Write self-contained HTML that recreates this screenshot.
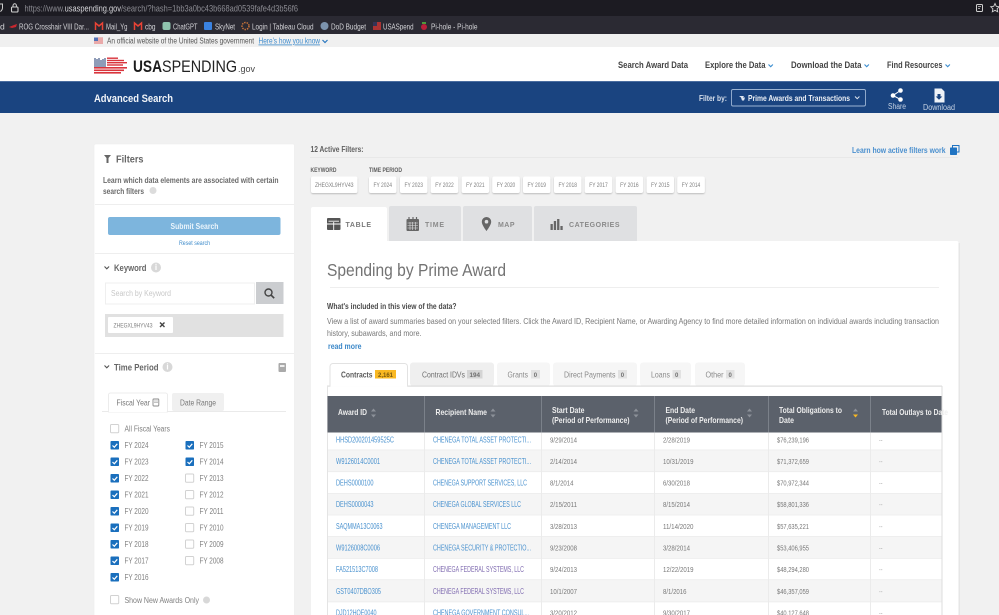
<!DOCTYPE html>
<html lang="en"><head><meta charset="utf-8"><title>Advanced Search | USAspending</title>
<style>
html,body{margin:0;padding:0;background:#f1f1f1;width:999px;height:615px;overflow:hidden}
svg{display:block;position:absolute;left:0;top:0;filter:blur(.35px)}
text{font-family:"Liberation Sans",sans-serif;font-size:8.5px;fill:#666;white-space:pre}
.b{font-weight:bold}
.bm{fill:#d4d4d8;font-size:8.5px}
.nav{fill:#444;font-size:9px;font-weight:bold}
.l{fill:#4a92cf;font-size:8px}
.p{fill:#7f6bb0;font-size:8px}
.g{fill:#787878;font-size:7.5px}
.h{fill:#eeeeee;font-size:8.5px;font-weight:bold}
.f{fill:#808080;font-size:8px}
.t{fill:#808080;font-size:6.5px}
.tb{fill:#8a8a8a;font-size:8px;font-weight:bold}
.st{fill:#6e6e6e;font-size:8.5px}
.bd{fill:#707070;font-size:6px;font-weight:bold}
</style></head><body>
<svg width="999" height="615" viewBox="0 0 999 615" xmlns="http://www.w3.org/2000/svg">
<defs><filter id="s" x="-20%" y="-20%" width="140%" height="150%"><feDropShadow dx="0" dy="1" stdDeviation=".7" flood-color="#000" flood-opacity=".22"/></filter></defs>
<rect width="999" height="615" fill="#f1f1f1"/>
<!-- browser -->
<rect width="999" height="16" fill="#1c1b22"/>
<rect y="16" width="999" height="18" fill="#2b2a33"/>
<rect y="34" width="999" height="13" fill="#f0f0f0"/>
<path d="M-2 4h4.500v4c0 2-2 3.500-2.200 3.500" fill="none" stroke="#ccc" stroke-width="1"/>
<rect x="11.500" y="7" width="6.500" height="5" rx="1" fill="none" stroke="#d0d0d0" stroke-width="1.100"/><path d="M13 7V5.500a1.700 1.700 0 0 1 3.400 0V7" fill="none" stroke="#d0d0d0" stroke-width="1"/>
<text x="24.500" y="11.500" textLength="273.500" lengthAdjust="spacingAndGlyphs" style="font-size:9.500px;fill:#8b8b92">https://www.<tspan fill="#d8d8dc">usaspending.gov</tspan>/search/?hash=1bb3a0bc43b668ad0539fafe4d3b56f6</text>
<rect x="976.500" y="4.500" width="6" height="7" rx="1" fill="none" stroke="#cfcfcf"/><path d="M978 6.500h3M978 8.500h2" stroke="#cfcfcf" stroke-width=".7"/>
<path d="M995 3.500l1.300 2.800 3 .4-2.200 2.100.6 3-2.700-1.500-2.700 1.500.6-3-2.200-2.100 3-.4z" fill="none" stroke="#cfcfcf" stroke-width=".9"/>
<text class="bm" x="0" y="29.500">d</text>
<path d="M9 27l5-2 3-1-1 3-4 1z" fill="#c8282f"/>
<text class="bm" x="19" y="29.500" textLength="70" lengthAdjust="spacingAndGlyphs">ROG Crosshair VIII Dar...</text>
<path d="M95.500 30v-7l3.500 3 3.500-3v7" fill="none" stroke="#ea4335" stroke-width="1.500"/>
<text class="bm" x="106" y="29.500" textLength="21.500" lengthAdjust="spacingAndGlyphs">Mail_Yg</text>
<path d="M134.500 30v-7l3.500 3 3.500-3v7" fill="none" stroke="#ea4335" stroke-width="1.500"/>
<text class="bm" x="145" y="29.500" textLength="10.500" lengthAdjust="spacingAndGlyphs">cbg</text>
<rect x="162.500" y="22" width="8" height="8" rx="2" fill="#8fc3ae"/>
<text class="bm" x="173" y="29.500" textLength="24.500" lengthAdjust="spacingAndGlyphs">ChatGPT</text>
<rect x="204" y="22" width="8" height="8" rx="1" fill="#3a82e0"/>
<text class="bm" x="215" y="29.500" textLength="20" lengthAdjust="spacingAndGlyphs">SkyNet</text>
<circle cx="245.500" cy="26" r="3.500" fill="none" stroke="#c6733a" stroke-width="1.500" stroke-dasharray="1.500 1"/>
<text class="bm" x="252" y="29.500" textLength="61.500" lengthAdjust="spacingAndGlyphs">Login | Tableau Cloud</text>
<circle cx="324.500" cy="26" r="4" fill="#7c93ad"/>
<text class="bm" x="331" y="29.500" textLength="35" lengthAdjust="spacingAndGlyphs">DoD Budget</text>
<rect x="373" y="22" width="8" height="8" fill="#a33"/><rect x="373" y="22" width="4" height="4" fill="#335"/>
<text class="bm" x="383" y="29.500" textLength="30.500" lengthAdjust="spacingAndGlyphs">USASpend</text>
<circle cx="424" cy="27" r="3" fill="#b8203a"/><path d="M422 23h4" stroke="#4c9a3a" stroke-width="2"/>
<text class="bm" x="431" y="29.500" textLength="46.500" lengthAdjust="spacingAndGlyphs">Pi-hole - Pi-hole</text>
<!-- gov banner -->
<rect x="94" y="37.500" width="9" height="6.500" fill="#e28a8a"/><path d="M94 39h9M94 41h9M94 43h9" stroke="#f6dede" stroke-width=".7"/><rect x="94" y="37.500" width="4" height="3.500" fill="#5271b5"/>
<text x="107" y="43.500" textLength="147" lengthAdjust="spacingAndGlyphs" style="font-size:8px;fill:#555">An official website of the United States government</text>
<text x="258.500" y="43.500" textLength="61.500" lengthAdjust="spacingAndGlyphs" text-decoration="underline" style="font-size:8px;fill:#3d8bcd">Here's how you know</text>
<path d="M322.500 40l2.500 2.500 2.500-2.500" fill="none" stroke="#2a78c0" stroke-width="1.200"/>
<!-- header -->
<rect y="47" width="999" height="34" fill="#fff"/>
<g fill="#1f3a70"><rect x="94.500" y="58" width="1" height="9"/><rect x="96.500" y="59" width="1" height="8"/><rect x="98.500" y="58" width="1" height="9"/><rect x="100.500" y="60" width="1" height="7"/><rect x="102.500" y="59" width="1" height="8"/><rect x="104.500" y="58" width="1" height="9"/></g>
<g fill="#d9343c"><rect x="107" y="57.500" width="11" height="1.400"/><rect x="107" y="59.800" width="17" height="1.400"/><rect x="107" y="62" width="20" height="1.400"/><rect x="107" y="64.300" width="16" height="1.400"/><rect x="94" y="67" width="33" height="1.600"/><rect x="94" y="69.500" width="30" height="1.600"/><rect x="94" y="72" width="27" height="1.600"/></g>
<text x="133" y="72" textLength="29" lengthAdjust="spacingAndGlyphs" style="font-size:16.500px;font-weight:bold;fill:#1b1b1b">USA</text>
<text x="162" y="72" textLength="75" lengthAdjust="spacingAndGlyphs" style="font-size:16.500px;fill:#222">SPENDING</text>
<text x="238" y="72" textLength="17" lengthAdjust="spacingAndGlyphs" style="font-size:9px;fill:#444">.gov</text>
<text class="nav" x="618" y="68" textLength="70" lengthAdjust="spacingAndGlyphs">Search Award Data</text>
<text class="nav" x="705" y="68" textLength="60.500" lengthAdjust="spacingAndGlyphs">Explore the Data</text>
<path d="M768.500 64.500l2.200 2.200 2.200-2.200" fill="none" stroke="#3c8ed0" stroke-width="1.100"/>
<text class="nav" x="791" y="68" textLength="70.500" lengthAdjust="spacingAndGlyphs">Download the Data</text>
<path d="M864.500 64.500l2.200 2.200 2.200-2.200" fill="none" stroke="#3c8ed0" stroke-width="1.100"/>
<text class="nav" x="887" y="68" textLength="55.500" lengthAdjust="spacingAndGlyphs">Find Resources</text>
<path d="M945.500 64.500l2.200 2.200 2.200-2.200" fill="none" stroke="#3c8ed0" stroke-width="1.100"/>
<!-- blue bar -->
<rect y="81" width="999" height="32" fill="#1a4480"/>
<rect y="81" width="999" height="1" fill="#4a6da0"/>
<text x="94" y="102" textLength="79" lengthAdjust="spacingAndGlyphs" class="b" style="font-size:11px;fill:#f2f5f9">Advanced Search</text>
<text x="699" y="101" textLength="28" lengthAdjust="spacingAndGlyphs" class="b" style="font-size:8px;fill:#d8e0eb">Filter by:</text>
<rect x="731.500" y="89.500" width="134" height="16.500" rx="1.500" fill="none" stroke="#9cb4d3" stroke-width=".9"/>
<path d="M739 96h5l-1 1.500h2l-1 3h-2l-1-3z" fill="#dfe6f0"/>
<text x="748" y="101" textLength="102" lengthAdjust="spacingAndGlyphs" class="b" style="font-size:8.500px;fill:#edf1f6">Prime Awards and Transactions</text>
<path d="M855 96.500l2.200 2.200 2.200-2.200" fill="none" stroke="#dfe6f0" stroke-width="1"/>
<g fill="#fff"><circle cx="900.500" cy="90.500" r="2.300"/><circle cx="893" cy="95.500" r="2.300"/><circle cx="900.500" cy="99.500" r="2.300"/></g><path d="M900.500 90.500L893 95.500l7.500 4" fill="none" stroke="#fff" stroke-width="1"/>
<text x="888" y="109" textLength="18" lengthAdjust="spacingAndGlyphs" style="font-size:8px;fill:#c5d2e3">Share</text>
<path d="M934.500 88.500h7l3 3v11h-10z" fill="#eef2f7"/><path d="M937.500 94h3v2.500h1.800l-3.300 3.200-3.300-3.200h1.800z" fill="#1a4480"/>
<text x="923" y="110" textLength="32" lengthAdjust="spacingAndGlyphs" style="font-size:8px;fill:#c5d2e3">Download</text>
<!-- left panel -->
<rect x="94" y="144" width="200.500" height="480" rx="2" fill="#fff" stroke="#ececec" stroke-width=".6"/>
<path d="M104 155h7l-2.500 3v5h-2v-5z" fill="#666"/>
<text x="116" y="162.500" textLength="27.500" lengthAdjust="spacingAndGlyphs" class="b" style="font-size:10.500px;fill:#666">Filters</text>
<text x="103" y="183" textLength="175.500" lengthAdjust="spacingAndGlyphs" class="b" style="font-size:8px;fill:#6a6a6a">Learn which data elements are associated with certain</text>
<text x="103" y="194" textLength="41" lengthAdjust="spacingAndGlyphs" class="b" style="font-size:8px;fill:#6a6a6a">search filters</text>
<circle cx="153" cy="190.500" r="3.500" fill="#dcdcdc"/>
<rect x="95" y="204" width="199" height="1" fill="#eee"/>
<rect x="108" y="217" width="172.500" height="18" rx="2" fill="#7db5dd"/>
<text x="170.500" y="229" textLength="48" lengthAdjust="spacingAndGlyphs" class="b" style="font-size:8.500px;fill:#eaf4fb">Submit Search</text>
<text x="179" y="245" textLength="31" lengthAdjust="spacingAndGlyphs" style="font-size:6.500px;fill:#3f8ccb">Reset search</text>
<rect x="95" y="253" width="199" height="1" fill="#eee"/>
<path d="M104.500 266.500l2.300 2.300 2.300-2.300" fill="none" stroke="#555" stroke-width="1.100"/>
<text x="114" y="271" textLength="32.500" lengthAdjust="spacingAndGlyphs" class="b" style="font-size:9.500px;fill:#666">Keyword</text>
<circle cx="156" cy="267.500" r="5" fill="#d8d8d8"/><rect x="155.400" y="265.500" width="1.200" height="4.500" fill="#fff"/><rect x="155.400" y="263.800" width="1.200" height="1.100" fill="#fff"/>
<rect x="105.500" y="283" width="149" height="21" fill="#fff" stroke="#efefef"/>
<text x="111" y="296" textLength="60" lengthAdjust="spacingAndGlyphs" style="font-size:8px;fill:#c8c8c8">Search by Keyword</text>
<rect x="256" y="282" width="27.500" height="22" fill="#cbcdd0"/>
<circle cx="268.500" cy="292.500" r="3.500" fill="none" stroke="#444" stroke-width="1.400"/><path d="M271 295l3.200 3.200" stroke="#444" stroke-width="1.600"/>
<rect x="105" y="314" width="178.500" height="23" fill="#e1e1e1"/>
<rect x="108" y="317" width="65" height="16" rx="1" fill="#fff"/>
<text class="t" x="113.500" y="327.500" textLength="39" lengthAdjust="spacingAndGlyphs" style="font-size:6px">ZHEGXL9HYV43</text>
<path d="M160 322.500l4.500 4.500M164.500 322.500l-4.500 4.500" stroke="#444" stroke-width="1.400"/>
<rect x="95" y="353" width="199" height="1" fill="#eee"/>
<path d="M104.500 365.500l2.300 2.300 2.300-2.300" fill="none" stroke="#555" stroke-width="1.100"/>
<text x="114" y="370.500" textLength="44.500" lengthAdjust="spacingAndGlyphs" class="b" style="font-size:9.500px;fill:#666">Time Period</text>
<circle cx="167.500" cy="367" r="5" fill="#d8d8d8"/><rect x="166.900" y="365" width="1.200" height="4.500" fill="#fff"/><rect x="166.900" y="363.300" width="1.200" height="1.100" fill="#fff"/>
<rect x="278.500" y="363" width="7.500" height="9" rx="1" fill="#aaa"/><rect x="280" y="365" width="4.500" height="2" fill="#eee"/>
<rect x="102" y="411" width="184" height="1" fill="#eaeaea"/>
<path d="M108.500 412v-17a2 2 0 0 1 2-2h55a2 2 0 0 1 2 2v17z" fill="#fff" stroke="#e8e8e8" stroke-width=".8"/>
<rect x="108.900" y="410" width="57.800" height="2" fill="#fff"/>
<text x="116.500" y="405.500" textLength="33.500" lengthAdjust="spacingAndGlyphs" style="font-size:8.500px;fill:#777">Fiscal Year</text>
<rect x="153" y="399" width="5.800" height="7" rx=".7" fill="none" stroke="#888" stroke-width=".9"/><path d="M154 401h4M154 402.500h4" stroke="#888" stroke-width=".6"/>
<rect x="172" y="393" width="52" height="18" rx="2" fill="#f0f0f0"/>
<text x="180" y="405.500" textLength="36" lengthAdjust="spacingAndGlyphs" style="font-size:8.500px;fill:#777">Date Range</text>
<!-- checkboxes -->
<g fill="#fff" stroke="#d2d2d2" stroke-width="1">
<rect x="110.500" y="424.500" width="8.200" height="8.200" rx="1"/>
<rect x="110.500" y="595.500" width="8.200" height="8.200" rx="1"/>
<rect x="185.500" y="474" width="8.200" height="8.200" rx="1"/>
<rect x="185.500" y="490.500" width="8.200" height="8.200" rx="1"/>
<rect x="185.500" y="507" width="8.200" height="8.200" rx="1"/>
<rect x="185.500" y="523.500" width="8.200" height="8.200" rx="1"/>
<rect x="185.500" y="540" width="8.200" height="8.200" rx="1"/>
<rect x="185.500" y="556.500" width="8.200" height="8.200" rx="1"/>
</g>
<g fill="#1a6fbd">
<rect x="110.500" y="441" width="8.500" height="8.500" rx=".8"/><rect x="110.500" y="457.500" width="8.500" height="8.500" rx=".8"/><rect x="110.500" y="474" width="8.500" height="8.500" rx=".8"/><rect x="110.500" y="490.500" width="8.500" height="8.500" rx=".8"/><rect x="110.500" y="507" width="8.500" height="8.500" rx=".8"/><rect x="110.500" y="523.500" width="8.500" height="8.500" rx=".8"/><rect x="110.500" y="540" width="8.500" height="8.500" rx=".8"/><rect x="110.500" y="556.500" width="8.500" height="8.500" rx=".8"/><rect x="110.500" y="573" width="8.500" height="8.500" rx=".8"/>
<rect x="185.500" y="441" width="8.500" height="8.500" rx=".8"/><rect x="185.500" y="457.500" width="8.500" height="8.500" rx=".8"/>
</g>
<g fill="none" stroke="#fff" stroke-width="1.200">
<path d="M112.500 445.500l1.800 1.800 3-3.500M112.500 462l1.800 1.800 3-3.500M112.500 478.500l1.800 1.800 3-3.500M112.500 495l1.800 1.800 3-3.500M112.500 511.500l1.800 1.800 3-3.500M112.500 528l1.800 1.800 3-3.500M112.500 544.500l1.800 1.800 3-3.500M112.500 561l1.800 1.800 3-3.500M112.500 577.500l1.800 1.800 3-3.500M187.500 445.500l1.800 1.800 3-3.500M187.500 462l1.800 1.800 3-3.500"/>
</g>
<text class="f" x="124.500" y="431.500" textLength="45.500" lengthAdjust="spacingAndGlyphs">All Fiscal Years</text>
<text class="f" x="124.500" y="448" textLength="24" lengthAdjust="spacingAndGlyphs">FY 2024</text>
<text class="f" x="124.500" y="464.500" textLength="24" lengthAdjust="spacingAndGlyphs">FY 2023</text>
<text class="f" x="124.500" y="481" textLength="24" lengthAdjust="spacingAndGlyphs">FY 2022</text>
<text class="f" x="124.500" y="497.500" textLength="24" lengthAdjust="spacingAndGlyphs">FY 2021</text>
<text class="f" x="124.500" y="514" textLength="24" lengthAdjust="spacingAndGlyphs">FY 2020</text>
<text class="f" x="124.500" y="530.500" textLength="24" lengthAdjust="spacingAndGlyphs">FY 2019</text>
<text class="f" x="124.500" y="547" textLength="24" lengthAdjust="spacingAndGlyphs">FY 2018</text>
<text class="f" x="124.500" y="563.500" textLength="24" lengthAdjust="spacingAndGlyphs">FY 2017</text>
<text class="f" x="124.500" y="580" textLength="24" lengthAdjust="spacingAndGlyphs">FY 2016</text>
<text class="f" x="199.500" y="448" textLength="24" lengthAdjust="spacingAndGlyphs">FY 2015</text>
<text class="f" x="199.500" y="464.500" textLength="24" lengthAdjust="spacingAndGlyphs">FY 2014</text>
<text class="f" x="199.500" y="481" textLength="24" lengthAdjust="spacingAndGlyphs">FY 2013</text>
<text class="f" x="199.500" y="497.500" textLength="24" lengthAdjust="spacingAndGlyphs">FY 2012</text>
<text class="f" x="199.500" y="514" textLength="24" lengthAdjust="spacingAndGlyphs">FY 2011</text>
<text class="f" x="199.500" y="530.500" textLength="24" lengthAdjust="spacingAndGlyphs">FY 2010</text>
<text class="f" x="199.500" y="547" textLength="24" lengthAdjust="spacingAndGlyphs">FY 2009</text>
<text class="f" x="199.500" y="563.500" textLength="24" lengthAdjust="spacingAndGlyphs">FY 2008</text>
<text class="f" x="124.500" y="603" textLength="74.500" lengthAdjust="spacingAndGlyphs">Show New Awards Only</text>
<circle cx="206.500" cy="600" r="3.500" fill="#d8d8d8"/>
<!-- active filters -->
<text x="310.500" y="152" textLength="53" lengthAdjust="spacingAndGlyphs" class="b" style="font-size:8px;fill:#5f5f5f">12 Active Filters:</text>
<rect x="310" y="157" width="648" height="1" fill="#e8e8e8"/>
<text x="852" y="153" textLength="93.500" lengthAdjust="spacingAndGlyphs" class="b" style="font-size:8.500px;fill:#4a8fce">Learn how active filters work</text>
<rect x="952.500" y="145.500" width="6.500" height="6.500" fill="none" stroke="#1f73c2" stroke-width="1"/><rect x="950" y="147.500" width="7" height="7.500" rx=".7" fill="#1f73c2"/>
<text x="310.500" y="172" textLength="26" lengthAdjust="spacingAndGlyphs" class="b" style="font-size:6px;fill:#5f5f5f">KEYWORD</text>
<text x="369" y="172" textLength="33" lengthAdjust="spacingAndGlyphs" class="b" style="font-size:6px;fill:#5f5f5f">TIME PERIOD</text>
<g fill="#fff" filter="url(#s)">
<rect x="311" y="176.500" width="46.500" height="16.500" rx="2"/>
<rect x="369" y="176.500" width="27.500" height="16.500" rx="2"/><rect x="400" y="176.500" width="27.500" height="16.500" rx="2"/><rect x="430.700" y="176.500" width="27.500" height="16.500" rx="2"/><rect x="461.600" y="176.500" width="27.500" height="16.500" rx="2"/><rect x="492.300" y="176.500" width="27.500" height="16.500" rx="2"/><rect x="523" y="176.500" width="27.500" height="16.500" rx="2"/><rect x="554" y="176.500" width="27.500" height="16.500" rx="2"/><rect x="584.700" y="176.500" width="27.500" height="16.500" rx="2"/><rect x="615.600" y="176.500" width="27.500" height="16.500" rx="2"/><rect x="646.500" y="176.500" width="27.500" height="16.500" rx="2"/><rect x="677.300" y="176.500" width="27.500" height="16.500" rx="2"/>
</g>
<text class="t" x="315" y="187" textLength="38.500" lengthAdjust="spacingAndGlyphs" style="font-size:6px">ZHEGXL9HYV43</text>
<text class="t" x="373.500" y="187" textLength="18.500" lengthAdjust="spacingAndGlyphs">FY 2024</text>
<text class="t" x="404.500" y="187" textLength="18.500" lengthAdjust="spacingAndGlyphs">FY 2023</text>
<text class="t" x="435.200" y="187" textLength="18.500" lengthAdjust="spacingAndGlyphs">FY 2022</text>
<text class="t" x="466.100" y="187" textLength="18.500" lengthAdjust="spacingAndGlyphs">FY 2021</text>
<text class="t" x="496.800" y="187" textLength="18.500" lengthAdjust="spacingAndGlyphs">FY 2020</text>
<text class="t" x="527.500" y="187" textLength="18.500" lengthAdjust="spacingAndGlyphs">FY 2019</text>
<text class="t" x="558.500" y="187" textLength="18.500" lengthAdjust="spacingAndGlyphs">FY 2018</text>
<text class="t" x="589.200" y="187" textLength="18.500" lengthAdjust="spacingAndGlyphs">FY 2017</text>
<text class="t" x="620.100" y="187" textLength="18.500" lengthAdjust="spacingAndGlyphs">FY 2016</text>
<text class="t" x="651" y="187" textLength="18.500" lengthAdjust="spacingAndGlyphs">FY 2015</text>
<text class="t" x="681.800" y="187" textLength="18.500" lengthAdjust="spacingAndGlyphs">FY 2014</text>
<!-- main tabs -->
<rect x="389" y="206" width="72" height="36" rx="2" fill="#dfe0e2"/>
<rect x="463" y="206" width="69" height="36" rx="2" fill="#dfe0e2"/>
<rect x="534" y="206" width="103" height="36" rx="2" fill="#dfe0e2"/>
<rect x="958" y="243" width="2" height="372" fill="#e6e6e6"/>
<rect x="311" y="241" width="647.500" height="380" rx="2" fill="#fff"/>
<rect x="311" y="207" width="76" height="36" rx="2" fill="#fff"/>
<rect x="327" y="218" width="13.500" height="12" rx="1" fill="#555"/><path d="M327 224h13.500M333.700 222v8M328.500 221.200h10.500" stroke="#fff" stroke-width=".9"/>
<text x="345.500" y="227" textLength="25.500" lengthAdjust="spacing" class="tb" style="font-size:7px;fill:#7a7a7a">TABLE</text>
<rect x="406.500" y="219" width="12.500" height="12" rx="1" fill="#666"/><path d="M409 217v3M413 217v3M416.500 217v3" stroke="#666" stroke-width="1.200"/><path d="M407.500 223h10.500M407.500 225.500h10.500M407.500 228h10.500M410 222v8M412.700 222v8M415.400 222v8" stroke="#dfe0e2" stroke-width=".6"/>
<text x="425" y="227" textLength="19" lengthAdjust="spacing" class="tb" style="font-size:7px">TIME</text>
<path d="M486.500 217a4.700 4.700 0 0 1 4.700 4.700c0 3.300-4.700 9.300-4.700 9.300s-4.700-6-4.700-9.300a4.700 4.700 0 0 1 4.700-4.700z" fill="#666"/><circle cx="486.500" cy="221.700" r="1.800" fill="#dfe0e2"/>
<text x="498" y="227" textLength="16.500" lengthAdjust="spacing" class="tb" style="font-size:7px">MAP</text>
<g fill="#666"><rect x="550.500" y="224" width="2.300" height="6"/><rect x="553.800" y="221" width="2.300" height="9"/><rect x="557.100" y="219" width="2.300" height="11"/><rect x="560.400" y="226" width="2.300" height="4"/></g>
<text x="569" y="227" textLength="50.500" lengthAdjust="spacing" class="tb" style="font-size:7px">CATEGORIES</text>
<!-- card -->
<text x="327" y="276" textLength="179" lengthAdjust="spacingAndGlyphs" style="font-size:17.500px;fill:#737373">Spending by Prime Award</text>
<rect x="330" y="287" width="609" height="1" fill="#eee"/>
<text x="327" y="309" textLength="129.500" lengthAdjust="spacingAndGlyphs" class="b" style="font-size:8px;fill:#4a4a4a">What's included in this view of the data?</text>
<text x="327" y="324" textLength="612" lengthAdjust="spacingAndGlyphs" style="font-size:8.500px;fill:#787878">View a list of award summaries based on your selected filters. Click the Award ID, Recipient Name, or Awarding Agency to find more detailed information on individual awards including transaction</text>
<text x="327" y="336" textLength="94.500" lengthAdjust="spacingAndGlyphs" style="font-size:8.500px;fill:#787878">history, subawards, and more.</text>
<text x="328" y="349" textLength="33.500" lengthAdjust="spacingAndGlyphs" class="b" style="font-size:8.500px;fill:#3a87c8">read more</text>
<!-- sub tabs -->
<rect x="410" y="362.500" width="84" height="23.500" rx="3" fill="#efefef"/>
<rect x="497" y="362.500" width="53" height="23.500" rx="3" fill="#f6f6f6"/>
<rect x="553" y="362.500" width="84" height="23.500" rx="3" fill="#f6f6f6"/>
<rect x="640" y="362.500" width="51" height="23.500" rx="3" fill="#f6f6f6"/>
<rect x="695" y="362.500" width="50" height="23.500" rx="3" fill="#f6f6f6"/>
<rect x="327" y="385.500" width="615" height="1.200" fill="#dcdcdc"/>
<path d="M330 386.500v-20a3 3 0 0 1 3-3h71.500a3 3 0 0 1 3 3v20" fill="#fff" stroke="#e2e2e2" stroke-width="1"/>
<rect x="330.500" y="385.500" width="76.500" height="1.400" fill="#fff"/>
<text x="341" y="377.500" textLength="31.500" lengthAdjust="spacingAndGlyphs" class="b" style="font-size:8.500px;fill:#5a5a5a">Contracts</text>
<rect x="375" y="370" width="21" height="8.500" fill="#f9b822"/>
<text x="378" y="377" textLength="15" lengthAdjust="spacingAndGlyphs" class="bd" style="fill:#7a5a10">2,161</text>
<text class="st" x="422" y="377.500" textLength="43" lengthAdjust="spacingAndGlyphs">Contract IDVs</text>
<rect x="467" y="370" width="15.500" height="8.500" fill="#d4d4d4"/><text class="bd" x="469.500" y="377" textLength="10.500" lengthAdjust="spacingAndGlyphs">194</text>
<text class="st" x="507.500" y="377.500" textLength="20.500" lengthAdjust="spacingAndGlyphs" style="fill:#8a8a8a">Grants</text>
<rect x="531" y="370" width="9" height="8.500" fill="#e2e2e2"/><text class="bd" x="533.800" y="377">0</text>
<text class="st" x="564" y="377.500" textLength="51.500" lengthAdjust="spacingAndGlyphs" style="fill:#8a8a8a">Direct Payments</text>
<rect x="618" y="370" width="9" height="8.500" fill="#e2e2e2"/><text class="bd" x="620.800" y="377">0</text>
<text class="st" x="651" y="377.500" textLength="19" lengthAdjust="spacingAndGlyphs" style="fill:#8a8a8a">Loans</text>
<rect x="672.500" y="370" width="8.500" height="8.500" fill="#e2e2e2"/><text class="bd" x="675" y="377">0</text>
<text class="st" x="705.500" y="377.500" textLength="18" lengthAdjust="spacingAndGlyphs" style="fill:#8a8a8a">Other</text>
<rect x="726" y="370" width="8.500" height="8.500" fill="#e2e2e2"/><text class="bd" x="728.500" y="377">0</text>
<!-- table -->
<rect x="327" y="386" width="1" height="229" fill="#e4e4e4"/>
<rect x="941.500" y="386" width="1" height="229" fill="#ddd"/>
<rect x="327.500" y="396" width="614" height="36.500" fill="#5b616b"/>
<g fill="#f5f5f5"><rect x="328" y="450" width="613.500" height="21.600"/><rect x="328" y="493.200" width="613.500" height="21.600"/><rect x="328" y="536.400" width="613.500" height="21.600"/><rect x="328" y="579.600" width="613.500" height="22"/></g>
<g fill="#ececec"><rect x="328" y="449.500" width="613.500" height=".8"/><rect x="328" y="471.300" width="613.500" height=".8"/><rect x="328" y="493" width="613.500" height=".8"/><rect x="328" y="514.600" width="613.500" height=".8"/><rect x="328" y="536.100" width="613.500" height=".8"/><rect x="328" y="558" width="613.500" height=".8"/><rect x="328" y="579.300" width="613.500" height=".8"/><rect x="328" y="601.500" width="613.500" height=".8"/></g>
<g fill="#7b818a"><rect x="424" y="396" width="1" height="36.500"/><rect x="541" y="396" width="1" height="36.500"/><rect x="654" y="396" width="1" height="36.500"/><rect x="768" y="396" width="1" height="36.500"/><rect x="870" y="396" width="1" height="36.500"/></g>
<g fill="#ebebeb"><rect x="424" y="432.500" width="1" height="183"/><rect x="541" y="432.500" width="1" height="183"/><rect x="654" y="432.500" width="1" height="183"/><rect x="768" y="432.500" width="1" height="183"/><rect x="870" y="432.500" width="1" height="183"/></g>
<text class="h" x="338" y="415" textLength="29" lengthAdjust="spacingAndGlyphs">Award ID</text>
<path d="M373.500 408.500l2.500 3h-5zM373.500 417.500l2.500-3h-5z" fill="#8c9199"/>
<text class="h" x="435.500" y="415" textLength="51.500" lengthAdjust="spacingAndGlyphs">Recipient Name</text>
<path d="M493 408.500l2.500 3h-5zM493 417.500l2.500-3h-5z" fill="#8c9199"/>
<text class="h" x="552" y="413" textLength="32.500" lengthAdjust="spacingAndGlyphs">Start Date</text>
<text class="h" x="552" y="423" textLength="77.500" lengthAdjust="spacingAndGlyphs">(Period of Performance)</text>
<path d="M636 408.500l2.500 3h-5zM636 417.500l2.500-3h-5z" fill="#8c9199"/>
<text class="h" x="665.500" y="413" textLength="29.500" lengthAdjust="spacingAndGlyphs">End Date</text>
<text class="h" x="665.500" y="423" textLength="77.500" lengthAdjust="spacingAndGlyphs">(Period of Performance)</text>
<path d="M749.500 408.500l2.500 3h-5zM749.500 417.500l2.500-3h-5z" fill="#8c9199"/>
<text class="h" x="779" y="413" textLength="63" lengthAdjust="spacingAndGlyphs">Total Obligations to</text>
<text class="h" x="779" y="423" textLength="15" lengthAdjust="spacingAndGlyphs">Date</text>
<path d="M855.500 408.500l2.500 3h-5z" fill="#8c9199"/><path d="M855.500 417.500l2.500-3h-5z" fill="#f9b822"/>
<svg x="871" y="396" width="70.500" height="36"><text class="h" x="11" y="19" textLength="66" lengthAdjust="spacingAndGlyphs">Total Outlays to Date</text></svg>
<!-- rows -->
<text class="l" x="336" y="442.500" textLength="58" lengthAdjust="spacingAndGlyphs">HHSD200201459525C</text>
<text class="l" x="433" y="442.500" textLength="98" lengthAdjust="spacingAndGlyphs">CHENEGA TOTAL ASSET PROTECTI...</text>
<text class="g" x="550" y="442.500" textLength="27" lengthAdjust="spacingAndGlyphs">9/29/2014</text>
<text class="g" x="663" y="442.500" textLength="27" lengthAdjust="spacingAndGlyphs">2/28/2019</text>
<text class="g" x="777" y="442.500" textLength="32" lengthAdjust="spacingAndGlyphs">$76,239,196</text>
<text class="g" x="879" y="442.500" textLength="3.500" lengthAdjust="spacingAndGlyphs" style="fill:#aaa">--</text>
<text class="l" x="336" y="464" textLength="44" lengthAdjust="spacingAndGlyphs">W9126014C0001</text>
<text class="l" x="433" y="464" textLength="98" lengthAdjust="spacingAndGlyphs">CHENEGA TOTAL ASSET PROTECTI...</text>
<text class="g" x="550" y="464" textLength="27" lengthAdjust="spacingAndGlyphs">2/14/2014</text>
<text class="g" x="663" y="464" textLength="30.500" lengthAdjust="spacingAndGlyphs">10/31/2019</text>
<text class="g" x="777" y="464" textLength="32" lengthAdjust="spacingAndGlyphs">$71,372,659</text>
<text class="g" x="879" y="464" textLength="3.500" lengthAdjust="spacingAndGlyphs" style="fill:#aaa">--</text>
<text class="l" x="336" y="485.500" textLength="37.500" lengthAdjust="spacingAndGlyphs">DEHS0000100</text>
<text class="l" x="433" y="485.500" textLength="94" lengthAdjust="spacingAndGlyphs">CHENEGA SUPPORT SERVICES, LLC</text>
<text class="g" x="550" y="485.500" textLength="23.500" lengthAdjust="spacingAndGlyphs">8/1/2014</text>
<text class="g" x="663" y="485.500" textLength="27" lengthAdjust="spacingAndGlyphs">6/30/2018</text>
<text class="g" x="777" y="485.500" textLength="32" lengthAdjust="spacingAndGlyphs">$70,972,344</text>
<text class="g" x="879" y="485.500" textLength="3.500" lengthAdjust="spacingAndGlyphs" style="fill:#aaa">--</text>
<text class="l" x="336" y="507" textLength="37.500" lengthAdjust="spacingAndGlyphs">DEHS0000043</text>
<text class="l" x="433" y="507" textLength="88" lengthAdjust="spacingAndGlyphs">CHENEGA GLOBAL SERVICES LLC</text>
<text class="g" x="550" y="507" textLength="27" lengthAdjust="spacingAndGlyphs">2/15/2011</text>
<text class="g" x="663" y="507" textLength="27" lengthAdjust="spacingAndGlyphs">8/15/2014</text>
<text class="g" x="777" y="507" textLength="32" lengthAdjust="spacingAndGlyphs">$58,801,336</text>
<text class="g" x="879" y="507" textLength="3.500" lengthAdjust="spacingAndGlyphs" style="fill:#aaa">--</text>
<text class="l" x="336" y="529" textLength="46.500" lengthAdjust="spacingAndGlyphs">SAQMMA13C0063</text>
<text class="l" x="433" y="529" textLength="78" lengthAdjust="spacingAndGlyphs">CHENEGA MANAGEMENT LLC</text>
<text class="g" x="550" y="529" textLength="27" lengthAdjust="spacingAndGlyphs">3/28/2013</text>
<text class="g" x="663" y="529" textLength="30.500" lengthAdjust="spacingAndGlyphs">11/14/2020</text>
<text class="g" x="777" y="529" textLength="32" lengthAdjust="spacingAndGlyphs">$57,635,221</text>
<text class="g" x="879" y="529" textLength="3.500" lengthAdjust="spacingAndGlyphs" style="fill:#aaa">--</text>
<text class="l" x="336" y="550.500" textLength="44" lengthAdjust="spacingAndGlyphs">W9126008C0006</text>
<text class="l" x="433" y="550.500" textLength="98" lengthAdjust="spacingAndGlyphs">CHENEGA SECURITY &amp; PROTECTIO...</text>
<text class="g" x="550" y="550.500" textLength="27" lengthAdjust="spacingAndGlyphs">9/23/2008</text>
<text class="g" x="663" y="550.500" textLength="27" lengthAdjust="spacingAndGlyphs">3/28/2014</text>
<text class="g" x="777" y="550.500" textLength="32" lengthAdjust="spacingAndGlyphs">$53,406,955</text>
<text class="g" x="879" y="550.500" textLength="3.500" lengthAdjust="spacingAndGlyphs" style="fill:#aaa">--</text>
<text class="l" x="336" y="572" textLength="42" lengthAdjust="spacingAndGlyphs">FA521513C7008</text>
<text class="p" x="433" y="572" textLength="91" lengthAdjust="spacingAndGlyphs">CHENEGA FEDERAL SYSTEMS, LLC</text>
<text class="g" x="550" y="572" textLength="27" lengthAdjust="spacingAndGlyphs">9/24/2013</text>
<text class="g" x="663" y="572" textLength="30.500" lengthAdjust="spacingAndGlyphs">12/22/2019</text>
<text class="g" x="777" y="572" textLength="32" lengthAdjust="spacingAndGlyphs">$48,294,280</text>
<text class="g" x="879" y="572" textLength="3.500" lengthAdjust="spacingAndGlyphs" style="fill:#aaa">--</text>
<text class="l" x="336" y="594" textLength="45" lengthAdjust="spacingAndGlyphs">GST0407DBO305</text>
<text class="p" x="433" y="594" textLength="91" lengthAdjust="spacingAndGlyphs">CHENEGA FEDERAL SYSTEMS, LLC</text>
<text class="g" x="550" y="594" textLength="27" lengthAdjust="spacingAndGlyphs">10/1/2007</text>
<text class="g" x="663" y="594" textLength="23.500" lengthAdjust="spacingAndGlyphs">8/1/2016</text>
<text class="g" x="777" y="594" textLength="32" lengthAdjust="spacingAndGlyphs">$46,357,059</text>
<text class="g" x="879" y="594" textLength="3.500" lengthAdjust="spacingAndGlyphs" style="fill:#aaa">--</text>
<text class="l" x="336" y="615.500" textLength="40.500" lengthAdjust="spacingAndGlyphs">DJD12HQE0040</text>
<text class="l" x="433" y="615.500" textLength="96" lengthAdjust="spacingAndGlyphs">CHENEGA GOVERNMENT CONSUL...</text>
<text class="g" x="550" y="615.500" textLength="27" lengthAdjust="spacingAndGlyphs">3/20/2012</text>
<text class="g" x="663" y="615.500" textLength="27" lengthAdjust="spacingAndGlyphs">9/30/2017</text>
<text class="g" x="777" y="615.500" textLength="32" lengthAdjust="spacingAndGlyphs">$40,127,648</text>
<text class="g" x="879" y="615.500" textLength="3.500" lengthAdjust="spacingAndGlyphs" style="fill:#aaa">--</text>
</svg>
</body></html>
